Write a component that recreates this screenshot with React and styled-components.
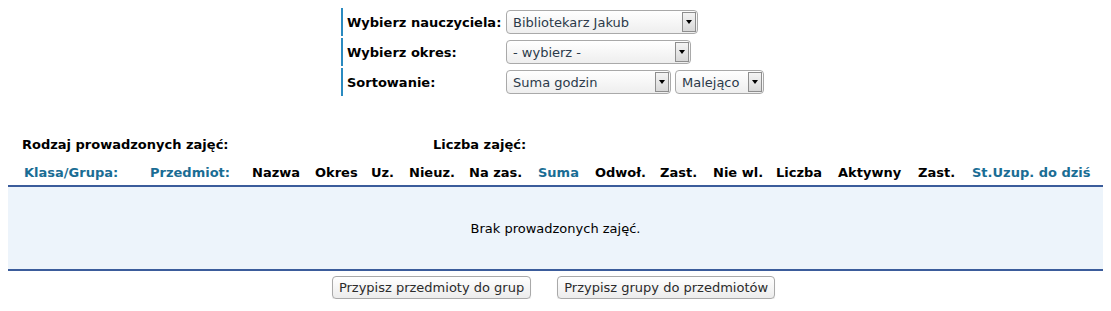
import styled, { createGlobalStyle } from "styled-components";

const GlobalStyle = createGlobalStyle`
  body {
    margin: 8px;
    background: #fff;
    font-family: "DejaVu Sans", Verdana, sans-serif;
    font-size: 13px;
    color: #000;
  }
`;

const Filters = styled.div`
  display: flex;
  justify-content: center;
`;

const FilterTable = styled.div`
  display: flex;
  flex-direction: column;
  gap: 2px;
  margin-left: -2px;
`;

const FilterRow = styled.div`
  display: flex;
  align-items: center;
  height: 28px;
  border-left: 2px solid #2a8ac0;
  padding-left: 4px;
`;

const FilterLabel = styled.div`
  width: 159px;
  font-weight: bold;
  font-size: 13px;
`;

const SelectBox = styled.div`
  position: relative;
  display: flex;
  align-items: center;
  width: ${(p) => p.$w}px;
  height: 24px;
  box-sizing: border-box;
  border: 1px solid #a9a9a9;
  border-radius: 4px;
  background: linear-gradient(#ffffff, #eeeeee);
  color: #2b3a4a;
  font-size: 13px;
  padding-left: 6px;
  margin-right: 4px;
`;

const Arrow = styled.div`
  position: absolute;
  right: 1px;
  top: 1px;
  bottom: 1px;
  width: 14px;
  border: 1px solid #8e8e8e;
  box-sizing: border-box;
  background: linear-gradient(#f4f4f4, #d8d8d8);
  display: flex;
  align-items: center;
  justify-content: center;
  &::after {
    content: "";
    border-left: 3px solid transparent;
    border-right: 3px solid transparent;
    border-top: 4px solid #000;
  }
`;

const Summary = styled.div`
  display: flex;
  margin-top: 41px;
  padding-left: 14px;
  font-weight: bold;
  font-size: 13px;
`;

const SummaryCell = styled.div`
  width: ${(p) => p.$w || "auto"};
`;

const Table = styled.div`
  margin-top: 13px;
`;

const HeadRow = styled.div`
  display: grid;
  grid-template-columns: 126px 102px 63px 56px 38px 60px 69px 57px 65px 53px 63px 62px 80px 54px 1fr;
  padding: 0 0 5px 16px;
  border-bottom: 2px solid #3b5c9b;
  font-weight: bold;
  font-size: 13px;
  white-space: nowrap;
`;

const Head = styled.div`
  color: ${(p) => (p.$link ? "#1a6d94" : "#000")};
`;

const Empty = styled.div`
  height: 82px;
  background: #edf4fb;
  border-bottom: 2px solid #3b5c9b;
  display: flex;
  align-items: center;
  justify-content: center;
  font-size: 13px;
`;

const Actions = styled.div`
  display: flex;
  justify-content: center;
  gap: 26px;
  margin-top: 5px;
  padding-right: 4px;
`;

const Button = styled.button`
  font-family: "DejaVu Sans", Verdana, sans-serif;
  font-size: 13px;
  color: #2b2b2b;
  height: 23px;
  padding: 0 6px;
  border: 1px solid #a9a9a9;
  border-radius: 4px;
  background: linear-gradient(#ffffff, #ececec);
  box-shadow: 0 1px 1px rgba(0, 0, 0, 0.1);
`;

function Select({ w, children }) {
  return (
    <SelectBox $w={w}>
      {children}
      <Arrow />
    </SelectBox>
  );
}

const headers = [
  ["Klasa/Grupa:", true],
  ["Przedmiot:", true],
  ["Nazwa"],
  ["Okres"],
  ["Uz."],
  ["Nieuz."],
  ["Na zas."],
  ["Suma", true],
  ["Odwoł."],
  ["Zast."],
  ["Nie wl."],
  ["Liczba"],
  ["Aktywny"],
  ["Zast."],
  ["St.Uzup. do dziś", true],
];

export default function App() {
  return (
    <>
      <GlobalStyle />
      <Filters>
        <FilterTable>
          <FilterRow>
            <FilterLabel>Wybierz nauczyciela:</FilterLabel>
            <Select w={192}>Bibliotekarz Jakub</Select>
          </FilterRow>
          <FilterRow>
            <FilterLabel>Wybierz okres:</FilterLabel>
            <Select w={185}>- wybierz -</Select>
          </FilterRow>
          <FilterRow>
            <FilterLabel>Sortowanie:</FilterLabel>
            <Select w={165}>Suma godzin</Select>
            <Select w={89}>Malejąco</Select>
          </FilterRow>
        </FilterTable>
      </Filters>
      <Summary>
        <SummaryCell $w="411px">Rodzaj prowadzonych zajęć:</SummaryCell>
        <SummaryCell>Liczba zajęć:</SummaryCell>
      </Summary>
      <Table>
        <HeadRow>
          {headers.map(([t, link], i) => (
            <Head key={i} $link={link}>
              {t}
            </Head>
          ))}
        </HeadRow>
        <Empty>Brak prowadzonych zajęć.</Empty>
      </Table>
      <Actions>
        <Button>Przypisz przedmioty do grup</Button>
        <Button>Przypisz grupy do przedmiotów</Button>
      </Actions>
    </>
  );
}
